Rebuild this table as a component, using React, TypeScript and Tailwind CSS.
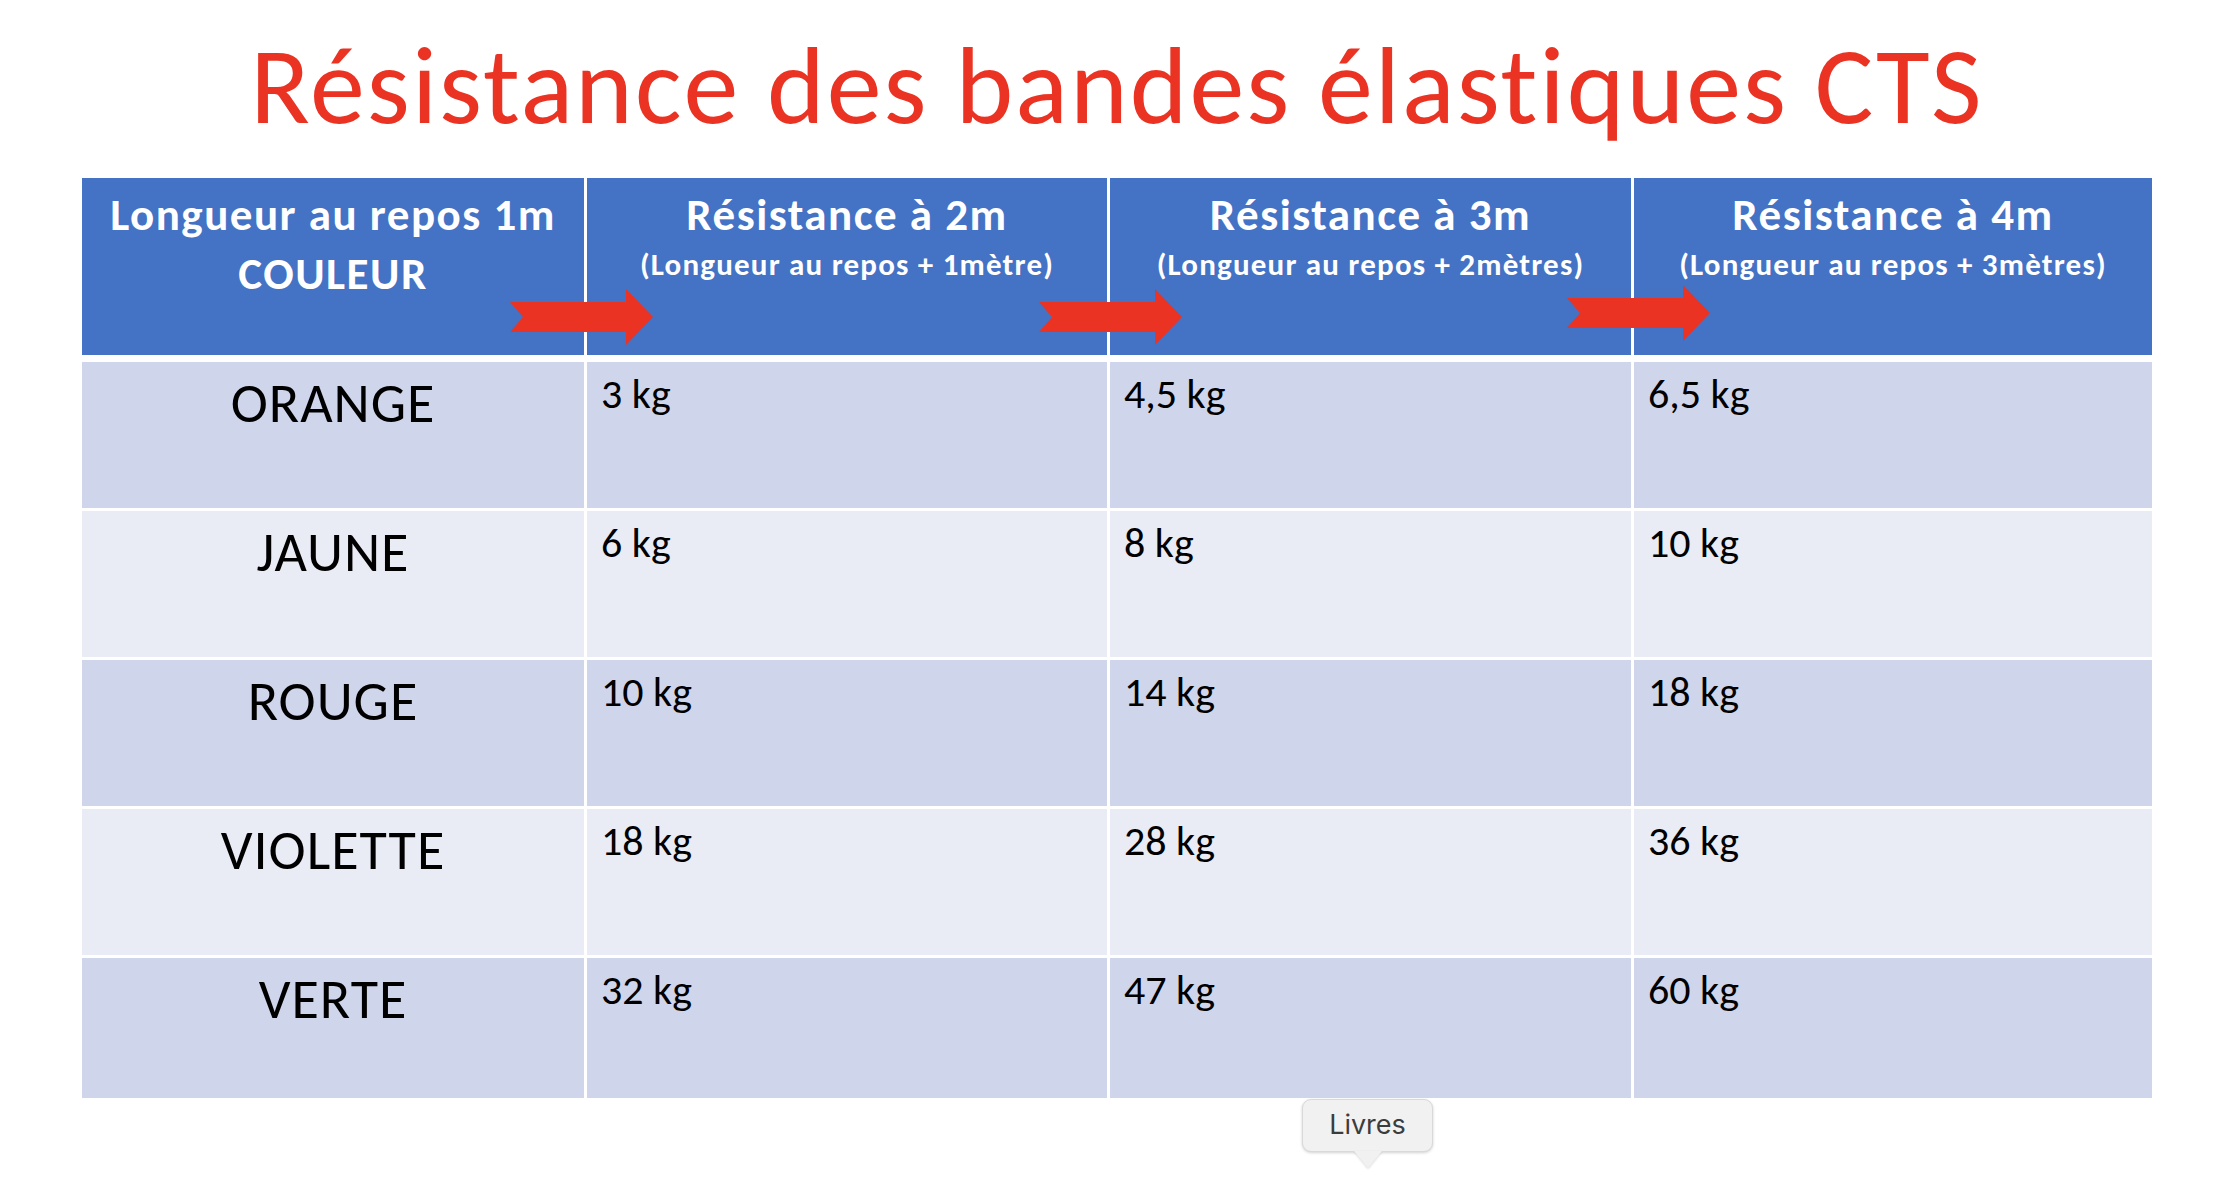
import React from "react";

const rows = [
  { name: "ORANGE", values: ["3 kg", "4,5 kg", "6,5 kg"], bg: "bg-[#cfd5ea]" },
  { name: "JAUNE", values: ["6 kg", "8 kg", "10 kg"], bg: "bg-[#e9ebf5]" },
  { name: "ROUGE", values: ["10 kg", "14 kg", "18 kg"], bg: "bg-[#cfd5ea]" },
  { name: "VIOLETTE", values: ["18 kg", "28 kg", "36 kg"], bg: "bg-[#e9ebf5]" },
  { name: "VERTE", values: ["32 kg", "47 kg", "60 kg"], bg: "bg-[#cfd5ea]" },
];

const stretches = [
  { title: "Résistance à 2m", sub: "(Longueur au repos + 1mètre)" },
  { title: "Résistance à 3m", sub: "(Longueur au repos + 2mètres)" },
  { title: "Résistance à 4m", sub: "(Longueur au repos + 3mètres)" },
];

function NotchedArrow({ className }: { className: string }) {
  return (
    <svg
      className={className}
      width="143"
      height="56"
      viewBox="0 0 143 56"
    >
      <polygon
        points="0,13 116,13 116,0 143,28 116,56 116,43 0,43 13,28"
        fill="#ea3323"
      />
    </svg>
  );
}

export default function App() {
  return (
    <div className="relative min-h-screen w-full bg-white font-['Carlito','Lato',sans-serif] [font-variant-ligatures:none]">
      <h1 className="pt-[31px] text-center text-[110px] leading-none font-normal tracking-[2px] text-[#ea3323]">
        Résistance des bandes élastiques CTS
      </h1>

      <div className="relative mx-[82px] mt-[37px] w-[2070px]">
        {/* header row */}
        <div className="grid h-[177px] grid-cols-[502px_520px_521px_518px] gap-x-[3px] text-white">
          <div className="bg-[#4472c4] pt-[7px] text-center text-[45px] leading-[59px] font-bold tracking-[1.5px]">
            <div>Longueur au repos 1m</div>
            <div>COULEUR</div>
          </div>
          {stretches.map((s) => (
            <div key={s.title} className="bg-[#4472c4] pt-[7px] text-center font-bold">
              <div className="text-[45px] leading-[59px] tracking-[1.5px]">{s.title}</div>
              <div className="text-[31px] leading-[40px] tracking-[1.2px]">{s.sub}</div>
            </div>
          ))}
        </div>

        {/* body rows */}
        <div className="mt-[7px] flex flex-col gap-y-[3px]">
          {rows.map((r, i) => (
            <div
              key={r.name}
              className={`grid grid-cols-[502px_520px_521px_518px] gap-x-[3px] text-black ${
                i === rows.length - 1 ? "h-[140px]" : "h-[146px]"
              }`}
            >
              <div className={`${r.bg} pt-[8px] text-center text-[56px] leading-[1.2] tracking-[1px]`}>
                {r.name}
              </div>
              {r.values.map((v, j) => (
                <div key={j} className={`${r.bg} pt-[7px] pl-[14px] text-[42px] leading-[1.2]`}>
                  {v}
                </div>
              ))}
            </div>
          ))}
        </div>

        <NotchedArrow className="absolute left-[428px] top-[111px]" />
        <NotchedArrow className="absolute left-[957px] top-[111px]" />
        <NotchedArrow className="absolute left-[1485px] top-[107px]" />
      </div>

      {/* tooltip */}
      <div className="absolute left-[1302px] top-[1099px] flex flex-col items-center">
        <div className="flex h-[53px] w-[131px] items-center justify-center rounded-[9px] border border-[#d9d9d9] bg-[#f1f1f1] font-['Inter',sans-serif] text-[27px] text-[#3c3c3c] shadow-[0_1px_3px_rgba(0,0,0,0.18)]">
          Livres
        </div>
        <div className="-mt-[1px] h-0 w-0 border-x-[14px] border-t-[17px] border-x-transparent border-t-[#f1f1f1] drop-shadow-[0_1px_1px_rgba(0,0,0,0.15)]" />
      </div>
    </div>
  );
}
